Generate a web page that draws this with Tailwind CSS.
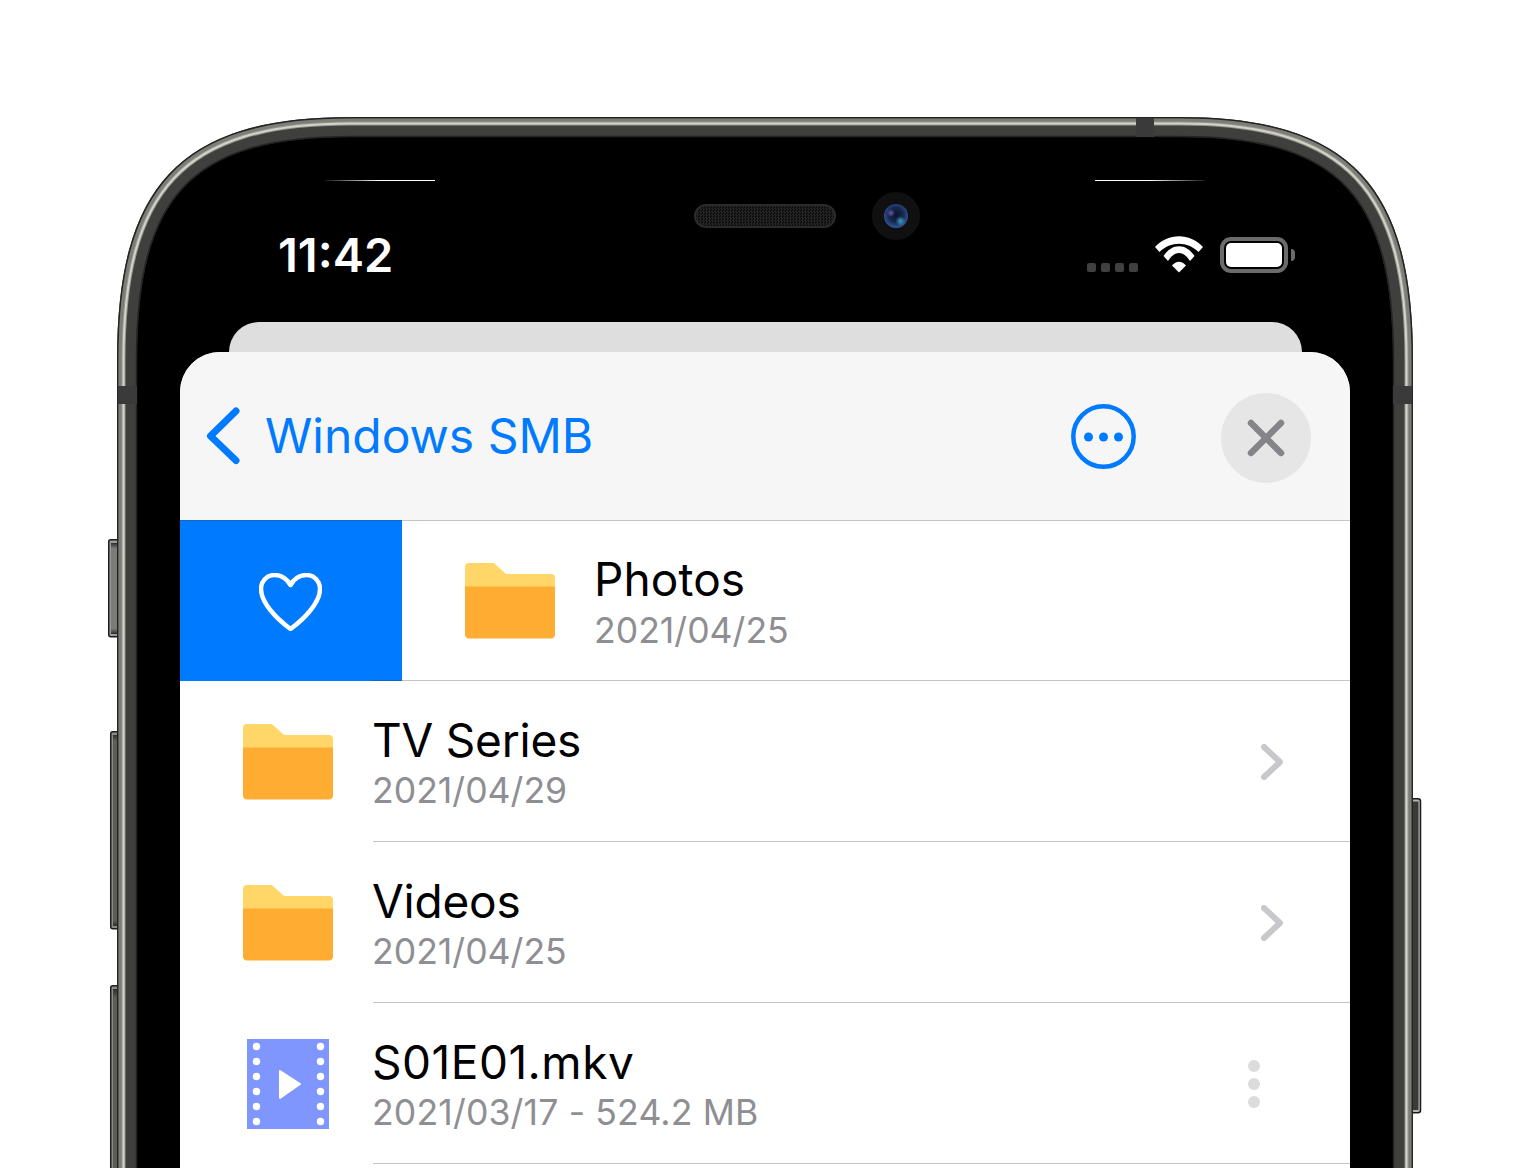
<!DOCTYPE html>
<html lang="en">
<head>
  <meta charset="UTF-8" />
  <title>Windows SMB</title>
  <script src="https://cdn.jsdelivr.net/npm/@tailwindcss/browser@4"></script>
</head>
<body class="bg-white font-['Inter','Liberation_Sans',sans-serif]">
  <div class="relative w-[1530px] h-[1168px] overflow-hidden">

    <!-- Phone hardware -->
    <svg class="absolute inset-0" width="1530" height="1168" viewBox="0 0 1530 1168" fill="none">
      <defs>
        <linearGradient id="btn" x1="0" y1="0" x2="0" y2="1">
          <stop offset="0" stop-color="#2e2e2c"/>
          <stop offset="0.06" stop-color="#7b7c77"/>
          <stop offset="0.94" stop-color="#7b7c77"/>
          <stop offset="1" stop-color="#2e2e2c"/>
        </linearGradient>
        <linearGradient id="btnlong" x1="0" y1="0" x2="0" y2="1">
          <stop offset="0" stop-color="#2e2e2c"/>
          <stop offset="0.03" stop-color="#5c5c58"/>
          <stop offset="0.97" stop-color="#5c5c58"/>
          <stop offset="1" stop-color="#2e2e2c"/>
        </linearGradient>
      </defs>
      <!-- side buttons -->
      <rect x="108.750" y="539.750" width="14" height="97" rx="2" fill="#9a9b95" stroke="#1d1d1d" stroke-width="1.500"/>
      <rect x="111" y="543" width="12" height="91" fill="url(#btn)"/>
      <rect x="110.750" y="731.750" width="12" height="197" rx="2" fill="#8c8c87" stroke="#1d1d1d" stroke-width="1.500"/>
      <rect x="113" y="735" width="10" height="191" fill="url(#btnlong)"/>
      <rect x="110.750" y="985.750" width="12" height="300" rx="2" fill="#8c8c87" stroke="#1d1d1d" stroke-width="1.500"/>
      <rect x="113" y="989" width="10" height="300" fill="url(#btnlong)"/>
      <rect x="1405" y="798.750" width="15.500" height="314" rx="2.500" fill="#b4b4ab" stroke="#1a1a1a" stroke-width="1.500"/>
      <rect x="1405" y="801.500" width="13.500" height="308.500" fill="#3a3a38"/>
      <!-- band -->
      <path d="M127 1200V360C127 193.500 183.500 127 350 127H1180C1346.500 127 1403 193.500 1403 360V1200" fill="#000" stroke="#3f3f3e" stroke-width="20"/>
      <path d="M117.750 1200V360C117.750 188.400 178.400 117.750 350 117.750H1180C1351.600 117.750 1412.250 188.400 1412.250 360V1200" stroke="#242424" stroke-width="1.500"/>
      <path d="M120.500 1200V360C120.500 190 180 120.500 350 120.500H1180C1350 120.500 1409.500 190 1409.500 360V1200" stroke="#7d7d77" stroke-width="4"/>
      <path d="M123.500 1200V360C123.500 191.600 181.600 123.500 350 123.500H1180C1348.400 123.500 1406.500 191.600 1406.500 360V1200" stroke="#96968f" stroke-width="4"/>
      <path d="M123.500 1200V360C123.500 191.600 181.600 123.500 350 123.500H1180C1348.400 123.500 1406.500 191.600 1406.500 360V1200" stroke="#d2d2c8" stroke-width="2"/>
      <path d="M136.500 1200V360C136.500 198.700 188.700 136.500 350 136.500H1180C1341.300 136.500 1393.500 198.700 1393.500 360V1200" stroke="#232323" stroke-width="1.500"/>
      <!-- antenna bands -->
      <g fill="#3a3a3a">
        <rect x="1136" y="118" width="18" height="19"/>
        <rect x="118" y="386" width="19" height="18"/>
        <rect x="1393" y="386" width="19" height="18"/>
      </g>
    </svg>

    <!-- Sensor housing -->
    <div class="absolute left-[325px] top-[180px] w-[110px] h-px bg-gradient-to-r from-white/10 via-white to-white"></div>
    <div class="absolute left-[1095px] top-[180px] w-[110px] h-px bg-gradient-to-r from-white via-white to-white/10"></div>
    <div class="absolute left-[694px] top-[204px] w-[142px] h-[24px] rounded-full border-2 border-[#2b2b2b] bg-[repeating-conic-gradient(#242424_0_25%,#0e0e0e_0_50%)] bg-[length:3px_3px]"></div>
    <div class="absolute left-[872px] top-[192px] w-[48px] h-[48px] rounded-full bg-[#101010] flex items-center justify-center">
      <svg width="24" height="24" viewBox="0 0 24 24">
        <defs>
          <radialGradient id="lens" cx="0.5" cy="0.45" r="0.55">
            <stop offset="0" stop-color="#0b1428"/>
            <stop offset="0.55" stop-color="#16284f"/>
            <stop offset="1" stop-color="#33589f"/>
          </radialGradient>
          <radialGradient id="teal">
            <stop offset="0" stop-color="#3f9fc6"/>
            <stop offset="1" stop-color="#3f9fc6" stop-opacity="0"/>
          </radialGradient>
          <radialGradient id="violet">
            <stop offset="0" stop-color="#7a4fb5"/>
            <stop offset="1" stop-color="#7a4fb5" stop-opacity="0"/>
          </radialGradient>
        </defs>
        <circle cx="12" cy="12" r="12" fill="url(#lens)"/>
        <circle cx="7" cy="9" r="4" fill="url(#violet)"/>
        <circle cx="16.500" cy="17" r="5" fill="url(#teal)"/>
      </svg>
    </div>

    <div class="relative pt-[236px]">
      <!-- Status bar -->
      <div class="ml-[278px] w-[1017px] h-[86px] flex justify-between text-white">
        <span class="text-[47px] leading-[38px] font-semibold">11:42</span>
        <div class="flex items-start">
          <div class="flex gap-[5px] mt-[27px] mr-[17px]">
            <i class="block w-[9px] h-[9px] rounded-[2px] bg-[#404040]"></i>
            <i class="block w-[9px] h-[9px] rounded-[2px] bg-[#404040]"></i>
            <i class="block w-[9px] h-[9px] rounded-[2px] bg-[#404040]"></i>
            <i class="block w-[9px] h-[9px] rounded-[2px] bg-[#404040]"></i>
          </div>
          <svg class="mr-[17px]" width="48" height="37" viewBox="0 0 48 37" fill="#fff">
            <path d="M0 11C13-3.500 35-3.500 48 11L43.500 16C32.500 5 15.500 5 4.500 16Z"/>
            <path d="M8.500 20C17 7 31 7 39.500 20L35 25C28.500 14.300 19.500 14.300 13 25Z"/>
            <path d="M17 29.500C21 24.400 27 24.400 31 29.500L24 36.500Z"/>
          </svg>
          <div class="mt-px w-[68px] h-[36px] rounded-[11px] border-[4px] border-[#6b6b6b] p-[2px]">
            <div class="w-full h-full rounded-[5px] bg-white"></div>
          </div>
          <div class="mt-[13px] ml-[3px] w-[4px] h-[12px] rounded-r-full bg-[#6b6b6b]"></div>
        </div>
      </div>

      <!-- Sheet behind -->
      <div class="mx-[229px] w-[1073px] h-[30px] rounded-t-[30px] bg-[#dedede]"></div>

      <!-- Sheet -->
      <div class="mx-[180px] w-[1170px] rounded-t-[40px] bg-white overflow-hidden">
        <div class="h-[168px] bg-[#f6f6f6] flex items-center pl-[25px] pr-[39px]">
          <svg width="36" height="58" viewBox="0 0 36 58" fill="none" stroke="#007aff" stroke-width="7" stroke-linecap="round" stroke-linejoin="round">
            <path d="M31 4L5.500 29L31 53.500"/>
          </svg>
          <span class="ml-[24px] text-[48px] leading-none text-[#007aff]">Windows SMB</span>
          <svg class="ml-auto" width="65" height="65" viewBox="0 0 65 65" fill="#007aff">
            <circle cx="32.500" cy="32.500" r="30.200" fill="none" stroke="#007aff" stroke-width="4.500"/>
            <circle cx="17.500" cy="33" r="4.500"/>
            <circle cx="32.500" cy="33" r="4.500"/>
            <circle cx="47.500" cy="33" r="4.500"/>
          </svg>
          <div class="ml-[85px] mt-[4px] w-[90px] h-[90px] rounded-full bg-[#e6e6e7] flex items-center justify-center">
            <svg width="40" height="40" viewBox="0 0 40 40" fill="none" stroke="#858589" stroke-width="6.500" stroke-linecap="round">
              <path d="M5 5L35 35M35 5L5 35"/>
            </svg>
          </div>
        </div>

        <!-- Swiped row -->
        <div class="relative flex h-[161px]">
          <div class="w-[222px] bg-[#007aff] flex items-center justify-center pr-[1px]">
            <svg class="mt-[2px]" width="63" height="58" viewBox="0 0 63 58" fill="none" stroke="#fff" stroke-width="4.500">
              <path d="M31.500 12C28 6 22 2 15.500 2C7.500 2 2 8.500 2 16C2 30 18 46 31.500 56C45 46 61 30 61 16C61 8.500 55.500 2 47.500 2C41 2 35 6 31.500 12Z" stroke-linejoin="round"/>
            </svg>
          </div>
          <div class="flex-1 flex items-center pl-[63px] gap-[39px]">
            <svg width="90" height="76" viewBox="0 0 90 76">
              <path d="M0 4A4 4 0 0 1 4 0H28A3 3 0 0 1 30 1L41 11H86A4 4 0 0 1 90 15V25H0Z" fill="#ffd667"/>
              <path d="M0 23.500H90V71A4 4 0 0 1 86 75.500H4A4 4 0 0 1 0 71Z" fill="#ffac33"/>
            </svg>
            <div class="pt-[2px]">
              <div class="text-[46px] tracking-[0.1px] leading-[54px] text-black">Photos</div>
              <div class="mt-[4px] text-[35.6px] leading-[42px] text-[#8e8e93]">2021/04/25</div>
            </div>
          </div>
          <div class="absolute top-0 inset-x-0 h-px bg-[#3c3c43]/30"></div>
          <div class="absolute bottom-0 left-[192px] right-0 h-px bg-[#3c3c43]/30"></div>
        </div>

        <!-- TV Series -->
        <div class="flex items-center h-[161px] pl-[63px] gap-[40px]">
          <svg width="90" height="76" viewBox="0 0 90 76">
            <path d="M0 4A4 4 0 0 1 4 0H28A3 3 0 0 1 30 1L41 11H86A4 4 0 0 1 90 15V25H0Z" fill="#ffd667"/>
            <path d="M0 23.500H90V71A4 4 0 0 1 86 75.500H4A4 4 0 0 1 0 71Z" fill="#ffac33"/>
          </svg>
          <div class="flex-1 self-stretch flex items-center justify-between border-b border-[#3c3c43]/30 pr-[67px]">
            <div class="pt-[3px] -ml-px">
              <div class="text-[46px] tracking-[-0.2px] leading-[54px] text-black">TV Series</div>
              <div class="mt-[3px] text-[35.6px] leading-[42px] text-[#8e8e93]">2021/04/29</div>
            </div>
            <svg class="mt-[2px]" width="22" height="36" viewBox="0 0 22 36" fill="none" stroke="#c7c7cc" stroke-width="6" stroke-linecap="round" stroke-linejoin="round">
              <path d="M3 3L19 18L3 33"/>
            </svg>
          </div>
        </div>

        <!-- Videos -->
        <div class="flex items-center h-[161px] pl-[63px] gap-[40px]">
          <svg width="90" height="76" viewBox="0 0 90 76">
            <path d="M0 4A4 4 0 0 1 4 0H28A3 3 0 0 1 30 1L41 11H86A4 4 0 0 1 90 15V25H0Z" fill="#ffd667"/>
            <path d="M0 23.500H90V71A4 4 0 0 1 86 75.500H4A4 4 0 0 1 0 71Z" fill="#ffac33"/>
          </svg>
          <div class="flex-1 self-stretch flex items-center justify-between border-b border-[#3c3c43]/30 pr-[67px]">
            <div class="pt-[3px] -ml-px">
              <div class="text-[46px] tracking-[-0.2px] leading-[54px] text-black">Videos</div>
              <div class="mt-[3px] text-[35.6px] leading-[42px] text-[#8e8e93]">2021/04/25</div>
            </div>
            <svg class="mt-[2px]" width="22" height="36" viewBox="0 0 22 36" fill="none" stroke="#c7c7cc" stroke-width="6" stroke-linecap="round" stroke-linejoin="round">
              <path d="M3 3L19 18L3 33"/>
            </svg>
          </div>
        </div>

        <!-- S01E01.mkv -->
        <div class="flex items-center h-[161px] pl-[67px] gap-[44px]">
          <svg width="82" height="90" viewBox="0 0 82 90">
            <rect width="82" height="90" fill="#7f96ff"/>
            <g fill="#fff">
              <circle cx="9.500" cy="7.500" r="3.700"/><circle cx="9.500" cy="22.500" r="3.700"/><circle cx="9.500" cy="37.500" r="3.700"/>
              <circle cx="9.500" cy="52.500" r="3.700"/><circle cx="9.500" cy="67.500" r="3.700"/><circle cx="9.500" cy="82.500" r="3.700"/>
              <circle cx="73.500" cy="7.500" r="3.700"/><circle cx="73.500" cy="22.500" r="3.700"/><circle cx="73.500" cy="37.500" r="3.700"/>
              <circle cx="73.500" cy="52.500" r="3.700"/><circle cx="73.500" cy="67.500" r="3.700"/><circle cx="73.500" cy="82.500" r="3.700"/>
              <path d="M33 32L53 45L33 59Z" stroke="#fff" stroke-width="2" stroke-linejoin="round"/>
            </g>
          </svg>
          <div class="flex-1 self-stretch flex items-center justify-between border-b border-[#3c3c43]/30 pr-[90px]">
            <div class="pt-[3px] -ml-px">
              <div class="text-[46px] tracking-[0.5px] leading-[54px] text-black">S01E01.mkv</div>
              <div class="mt-[3px] text-[35.6px] tracking-[0.15px] leading-[42px] text-[#8e8e93]">2021/03/17 - 524.2 MB</div>
            </div>
            <div class="flex flex-col gap-[6px] mt-[2px]">
              <i class="block w-[12px] h-[12px] rounded-full bg-[#dcdcdc]"></i>
              <i class="block w-[12px] h-[12px] rounded-full bg-[#dcdcdc]"></i>
              <i class="block w-[12px] h-[12px] rounded-full bg-[#dcdcdc]"></i>
            </div>
          </div>
        </div>

        <!-- next row, cut off by the window -->
        <div class="h-[20px]"></div>
      </div>
    </div>
  </div>
</body>
</html>
